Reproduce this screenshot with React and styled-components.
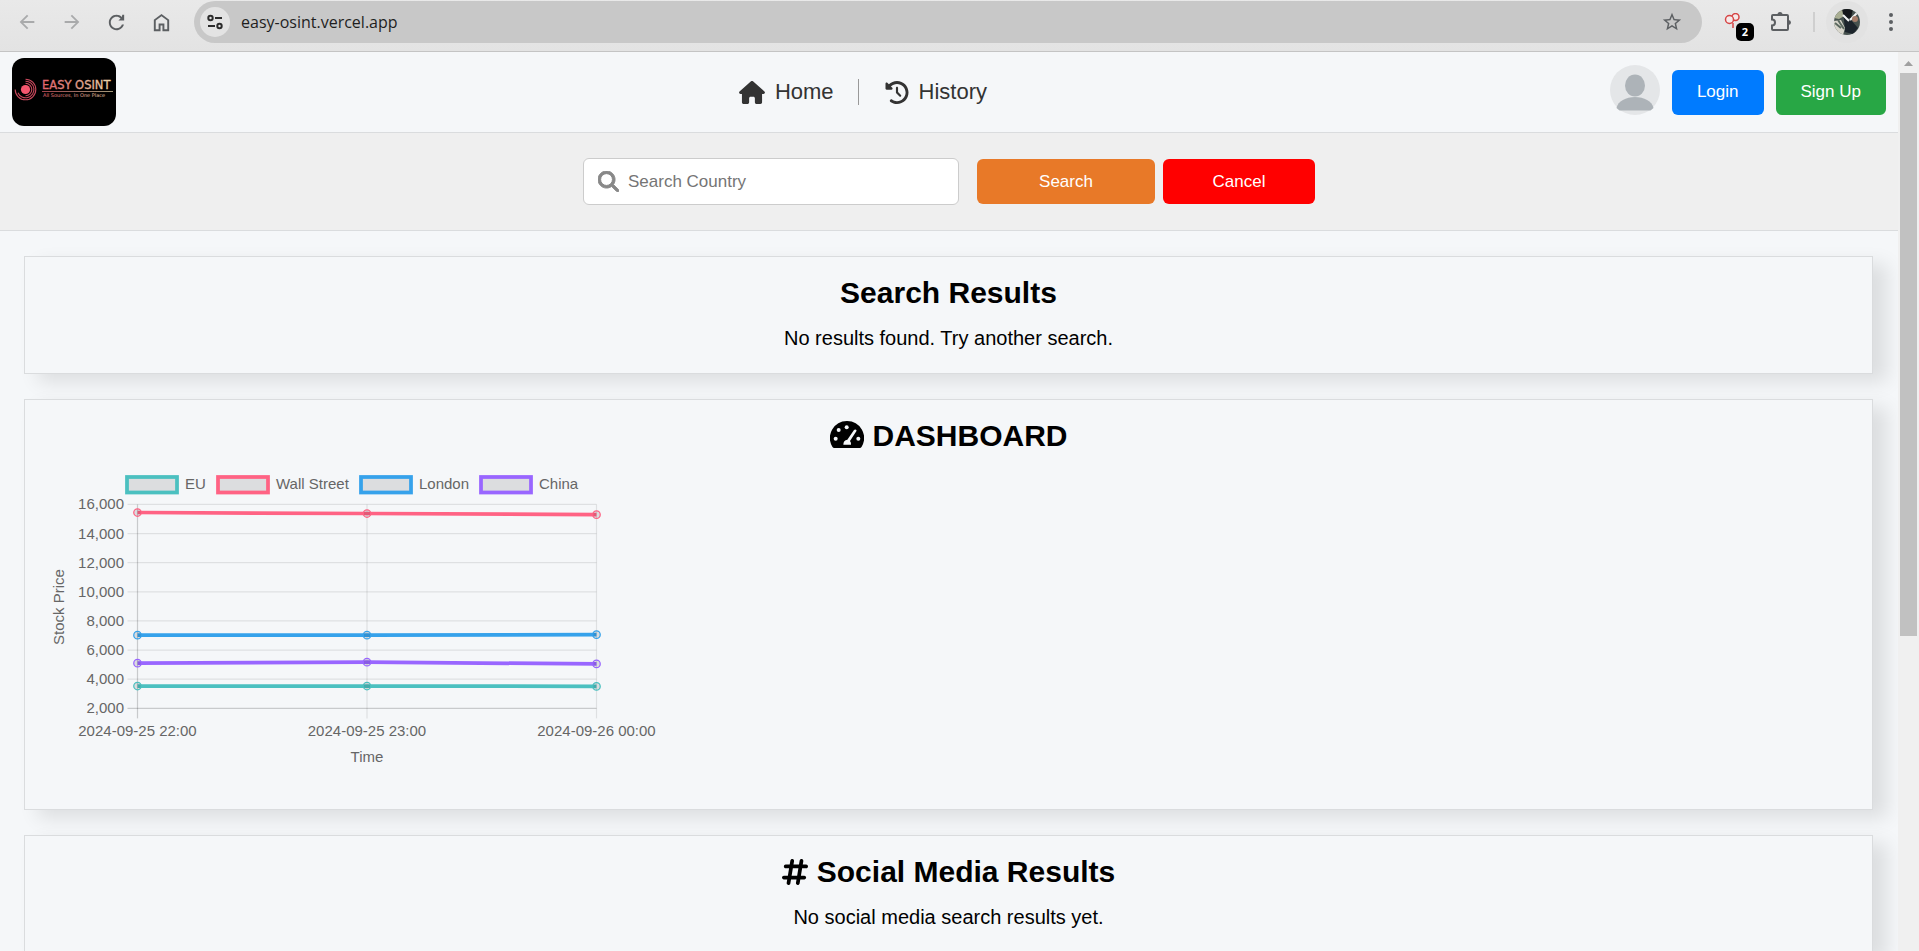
import React from "react";
import styled, { createGlobalStyle } from "styled-components";
import { FaHouse, FaClockRotateLeft, FaMagnifyingGlass, FaHashtag } from "react-icons/fa6";

const GlobalStyle = createGlobalStyle`
  * { box-sizing: border-box; }
  body {
    margin: 0;
    background: #f5f7f9;
    color: #000;
    font-family: "Liberation Sans", Arial, sans-serif;
  }
  button, input { font-family: inherit; }
`;

const Window = styled.div`
  display: flex;
  flex-direction: column;
  height: 100vh;
  overflow: hidden;
`;

/* ---------- browser toolbar ---------- */

const Toolbar = styled.div`
  flex: none;
  display: flex;
  align-items: flex-start;
  height: 52px;
  padding: 1px 5px 0 4px;
  background: linear-gradient(#e9e9e9, #e3e3e3);
  border-bottom: 1px solid #c4c4c4;
`;

const ToolButton = styled.button`
  flex: none;
  display: flex;
  align-items: center;
  justify-content: center;
  width: ${(p) => p.$width || 45}px;
  height: 42px;
  padding: 0;
  border: 0;
  background: none;
  color: ${(p) => (p.disabled ? "#a9aaab" : "#5c5f62")};
`;

const AddressBar = styled.div`
  flex: 1;
  display: flex;
  align-items: center;
  height: 42px;
  margin: 0 8px 0 10px;
  padding: 0 8px 0 6px;
  border-radius: 21px;
  background: #c8c8c8;
`;

const SiteInfo = styled.button`
  display: flex;
  align-items: center;
  justify-content: center;
  width: 30px;
  height: 30px;
  padding: 0;
  border: 0;
  border-radius: 50%;
  background: #e3e3e3;
`;

const AddressInput = styled.input`
  flex: 1;
  min-width: 0;
  margin-left: 11px;
  padding: 0;
  border: 0;
  outline: 0;
  background: none;
  color: #1f1f1f;
  font-family: "Open Sans", "Noto Sans", sans-serif;
  font-size: 16px;
  line-height: 24px;
`;

const ToolDivider = styled.span`
  width: 2px;
  height: 20px;
  margin: 11px 11px 0 7px;
  background: #cfcfcf;
`;

const ExtensionWrap = styled.span`
  position: relative;
  width: 18px;
  height: 18px;
  svg { display: block; }
`;

const ExtensionBadge = styled.span`
  position: absolute;
  left: 12px;
  top: 10px;
  width: 18px;
  height: 18px;
  border-radius: 5px;
  background: #000;
  color: #fff;
  font: bold 11px/18px "Open Sans", sans-serif;
  text-align: center;
`;

/* ---------- page shell ---------- */

const Viewport = styled.div`
  flex: 1;
  display: flex;
  min-height: 0;
`;

const Page = styled.div`
  flex: 1;
  min-width: 0;
  overflow: hidden;
`;

const Scrollbar = styled.div`
  flex: none;
  display: flex;
  flex-direction: column;
  align-items: center;
  width: 21px;
  background: #f0f0f0;
`;

const ScrollArrow = styled.svg`
  flex: none;
  width: 21px;
  height: 21px;
`;

const ScrollTrack = styled.div`
  flex: 1;
  width: 17px;
  margin-bottom: 21px;
`;

const ScrollThumb = styled.div`
  height: 65.7%;
  background: #c1c1c1;
`;

/* ---------- header ---------- */

const Header = styled.header`
  display: flex;
  align-items: center;
  justify-content: space-between;
  height: 81px;
  padding: 0 12px;
  border-bottom: 1px solid #dadcde;
`;

const Logo = styled.svg`
  display: block;
  width: 104px;
  height: 68px;
  margin-bottom: 1px;
`;

const Nav = styled.nav`
  display: flex;
  align-items: center;
`;

const NavLink = styled.a`
  display: flex;
  align-items: center;
  gap: 10px;
  color: #333;
  font-size: 22px;
  line-height: 26px;
  text-decoration: none;
  svg { flex: none; height: 23px; width: ${(p) => p.$iconWidth}px; }
  & + & {
    margin-left: 24px;
    padding-left: 26px;
    border-left: 1px solid #999;
  }
`;

const Account = styled.div`
  display: flex;
  align-items: center;
  gap: 12px;
`;

const Avatar = styled.svg`
  width: 50px;
  height: 50px;
  margin-bottom: 4px;
`;

const Button = styled.button`
  height: 45px;
  min-width: ${(p) => p.$width || 0}px;
  padding: 0 25px;
  border: 0;
  border-radius: 6px;
  background: ${(p) => p.$color};
  color: #fff;
  font-size: 17px;
  line-height: 20px;
`;

/* ---------- search ---------- */

const SearchForm = styled.form`
  display: flex;
  align-items: center;
  justify-content: center;
  gap: 8px;
  padding: 25px 0;
  background: #efefef;
  border-bottom: 1px solid #dadcde;
`;

const SearchField = styled.label`
  display: flex;
  align-items: center;
  gap: 9px;
  width: 376px;
  height: 47px;
  margin-right: 10px;
  padding: 0 14px;
  border: 1px solid #ccc;
  border-radius: 6px;
  background: #fff;
  color: #888;
  svg { flex: none; width: 21px; height: 21px; stroke: currentColor; stroke-width: 24px; }
`;

const SearchInput = styled.input`
  flex: 1;
  min-width: 0;
  padding: 0;
  border: 0;
  outline: 0;
  background: none;
  font-size: 17px;
  line-height: 20px;
  &::placeholder { color: #757575; }
`;

/* ---------- cards ---------- */

const Cards = styled.main`
  display: flex;
  flex-direction: column;
  gap: 25px;
  padding: 25px 25px 25px 24px;
`;

const Card = styled.section`
  padding: 19px 20px 20px;
  border: 1px solid #dadcde;
  background: #f5f7f9;
  box-shadow: 14px 8px 18px rgba(0, 0, 0, 0.1);
  text-align: center;
`;

const CardTitle = styled.h2`
  display: flex;
  align-items: center;
  justify-content: center;
  gap: 9px;
  margin: 0;
  font-size: 30px;
  line-height: 34px;
  svg { flex: none; height: 30px; width: ${(p) => p.$iconWidth}px; }
`;

const CardText = styled.p`
  margin: 16px 0 3px;
  font-size: 20px;
  line-height: 24px;
`;

const Chart = styled.svg`
  display: block;
  width: 640px;
  height: 326px;
  margin-top: 10px;
  font-size: 15px;
  fill: #666;
`;

const SERIES = [
  { name: "EU", color: "rgb(75,192,192)", y: [223, 223, 223.4], legendX: 80 },
  { name: "Wall Street", color: "rgb(255,99,132)", y: [49.5, 50.5, 51.7], legendX: 171 },
  { name: "London", color: "rgb(54,162,235)", y: [172.2, 172.2, 171.7], legendX: 314 },
  { name: "China", color: "rgb(153,102,255)", y: [200.2, 199.2, 200.9], legendX: 434 },
];
const TIMES = ["2024-09-25 22:00", "2024-09-25 23:00", "2024-09-26 00:00"];
const PRICES = [16000, 14000, 12000, 10000, 8000, 6000, 4000, 2000];
const COLUMNS = [92.5, 322, 551.5];
const TOP = 41.4;
const STEP = 29.14;
const BOTTOM = TOP + 7 * STEP;

function StockChart() {
  return (
    <Chart viewBox="0 0 640 326" role="img" aria-label="Stock prices over time">
      {SERIES.map((s) => (
        <g key={s.name}>
          <rect x={s.legendX + 2} y="14" width="50" height="15.5" fill="rgba(0,0,0,0.1)" stroke={s.color} strokeWidth="3.75" />
          <text x={s.legendX + 60} y="26">{s.name}</text>
        </g>
      ))}
      {PRICES.map((price, i) => (
        <g key={price}>
          <line x1="82.5" x2="551.5" y1={TOP + i * STEP} y2={TOP + i * STEP}
            stroke={i === 7 ? "rgba(0,0,0,0.18)" : "rgba(0,0,0,0.09)"} strokeWidth="1.25" />
          <text x="79" y={TOP + i * STEP + 5} textAnchor="end">{price.toLocaleString("en-US")}</text>
        </g>
      ))}
      {TIMES.map((time, i) => (
        <g key={time}>
          <line x1={COLUMNS[i]} x2={COLUMNS[i]} y1={TOP} y2={BOTTOM + 10}
            stroke={i === 0 ? "rgba(0,0,0,0.18)" : "rgba(0,0,0,0.09)"} strokeWidth="1.25" />
          <text x={COLUMNS[i]} y="273" textAnchor="middle">{time}</text>
        </g>
      ))}
      <text x="322" y="299" textAnchor="middle">Time</text>
      <text transform="translate(19 144) rotate(-90)" textAnchor="middle">Stock Price</text>
      {[...SERIES].reverse().map((s) => (
        <g key={s.name}>
          <polyline points={s.y.map((y, i) => `${COLUMNS[i]},${y}`).join(" ")} fill="none" stroke={s.color} strokeWidth="3.75" />
          {s.y.map((y, i) => (
            <circle key={i} cx={COLUMNS[i]} cy={y} r="3.75" fill="rgba(0,0,0,0.1)" stroke={s.color} strokeWidth="1.25" />
          ))}
        </g>
      ))}
    </Chart>
  );
}

function GaugeIcon() {
  return (
    <svg viewBox="0 0 102 90" aria-hidden="true">
      <path d="M51 0a51 51 0 0 1 44 77q-2 4-6 4H13q-4 0-6-4A51 51 0 0 1 51 0z" fill="currentColor" />
      <g fill="#f5f7f9">
        <circle cx="17" cy="53" r="6" />
        <circle cx="26" cy="27" r="6" />
        <circle cx="50" cy="19" r="6" />
        <circle cx="85" cy="53" r="6" />
        <path d="M40 71q0-14 12-15l20-29q3-3 6-1t1 5L60 60q4 5 3 11z" />
      </g>
    </svg>
  );
}

function BrandLogo() {
  return (
    <Logo viewBox="0 0 104 68" role="img" aria-label="Easy OSINT">
      <defs>
        <linearGradient id="brand" gradientUnits="userSpaceOnUse" x1="30" y1="0" x2="101" y2="0">
          <stop offset="0" stopColor="#e4606c" />
          <stop offset="0.5" stopColor="#dd9c8c" />
          <stop offset="1" stopColor="#ecdcae" />
        </linearGradient>
      </defs>
      <rect width="104" height="68" rx="12" fill="#000" />
      <circle cx="13.5" cy="31.5" r="4.6" fill="#f4566e" />
      <g fill="none" stroke="#c8485c" strokeWidth="1.1">
        <path d="M13.5 25.200a6.300 6.300 0 0 1 0 12.600" />
        <path d="M13.5 23.200a8.300 8.300 0 1 1 -7.500 11.500" />
        <path d="M13.5 21.200a10.300 10.300 0 1 1 -10.300 10.300" />
      </g>
      <text x="30" y="31" fontFamily="DejaVu Sans" fontSize="11.5" fill="url(#brand)" stroke="url(#brand)" strokeWidth="0.3">EASY OSINT</text>
      <path d="M30 33.500H101" stroke="url(#brand)" strokeWidth="0.7" />
      <text x="31" y="39" fontFamily="DejaVu Sans" fontSize="5" fill="url(#brand)">All Sources, In One Place</text>
    </Logo>
  );
}

const Icon = ({ d, size = 23 }) => (
  <svg width={size} height={size} viewBox="0 0 24 24" fill="currentColor" aria-hidden="true">
    <path d={d} />
  </svg>
);

const BACK = "M20 11H7.830l5.590-5.590L12 4l-8 8 8 8 1.410-1.410L7.830 13H20v-2z";
const FORWARD = "M4 11h12.170l-5.590-5.590L12 4l8 8-8 8-1.410-1.410L16.170 13H4v-2z";
const RELOAD = "M17.650 6.350C16.200 4.900 14.210 4 12 4c-4.420 0-7.990 3.580-7.990 8s3.570 8 7.990 8c3.730 0 6.840-2.550 7.730-6h-2.080c-.820 2.330-3.040 4-5.650 4-3.310 0-6-2.690-6-6s2.690-6 6-6c1.660 0 3.140.690 4.220 1.780L14 10h6V4h-2z";
const HOME = "M6 19h3v-6h6v6h3v-9l-6-4.500L6 10v9zm-2 2V9l8-6 8 6v12h-7v-6h-2v6H4z";
const STAR = "M22 9.240l-7.190-.620L12 2 9.190 8.630 2 9.240l5.460 4.730L5.820 21 12 17.270 18.180 21l-1.630-7.030L22 9.240zM12 15.400l-3.760 2.270 1-4.280-3.320-2.880 4.380-.380L12 6.100l1.710 4.040 4.380.380-3.320 2.880 1 4.280L12 15.400z";

function BrowserToolbar() {
  return (
    <Toolbar>
      <ToolButton disabled aria-label="Back"><Icon d={BACK} size={22} /></ToolButton>
      <ToolButton disabled aria-label="Forward"><Icon d={FORWARD} size={22} /></ToolButton>
      <ToolButton aria-label="Reload"><Icon d={RELOAD} /></ToolButton>
      <ToolButton aria-label="Home page"><Icon d={HOME} /></ToolButton>
      <AddressBar>
        <SiteInfo aria-label="Site information">
          <svg width="18" height="18" viewBox="0 0 18 18" fill="none" stroke="#2b2b2b" strokeWidth="2">
            <circle cx="4.500" cy="5" r="2.200" />
            <path d="M9 5h7M2 13h7" />
            <circle cx="13.500" cy="13" r="2.200" />
          </svg>
        </SiteInfo>
        <AddressInput aria-label="Address" defaultValue="easy-osint.vercel.app" />
        <ToolButton aria-label="Bookmark"><Icon d={STAR} size={22} /></ToolButton>
      </AddressBar>
      <ToolButton $width={46} aria-label="Extension">
        <ExtensionWrap>
          <svg width="18" height="18" viewBox="0 0 18 18" fill="#f5eaea" stroke="#d64545" strokeWidth="1.500">
            <path d="M9 10v5" />
            <circle cx="11.500" cy="4" r="3.500" />
            <circle cx="5.500" cy="6.500" r="4" />
          </svg>
          <ExtensionBadge>2</ExtensionBadge>
        </ExtensionWrap>
      </ToolButton>
      <ToolButton $width={50} aria-label="Extensions">
        <svg width="22" height="22" viewBox="0 0 22 22">
          <path d="M3 4h14a1 1 0 0 1 1 1v13a1 1 0 0 1-1 1H3a1 1 0 0 1-1-1v-3.500a3 3 0 0 0 0-6V5a1 1 0 0 1 1-1z" fill="none" stroke="#5c5f62" strokeWidth="2" />
          <path d="M7.500 3.500a2.500 2.500 0 0 1 5 0zM18.500 9a2.500 2.500 0 0 1 0 5z" fill="#5c5f62" />
        </svg>
      </ToolButton>
      <ToolDivider />
      <ToolButton $width={42} aria-label="Profile">
        <svg width="42" height="42" viewBox="0 0 42 42">
          <defs><clipPath id="face"><circle cx="21" cy="21" r="13" /></clipPath></defs>
          <circle cx="21" cy="21" r="21" fill="#e2e2e2" />
          <g clipPath="url(#face)">
            <rect x="8" y="8" width="26" height="26" fill="#47524f" />
            <path d="M8 8h9l3 6-7 4-5-1z" fill="#a9ae93" />
            <path d="M16 8h11l-2 9-7 1z" fill="#15181b" />
            <path d="M18 18l7 1 7 8-5 6-8-2z" fill="#1c242c" />
            <path d="M8 20l7-1 4 8-2 7H8z" fill="#d8d6cc" />
            <path d="M9 22l6 5M12 19l6 9" stroke="#5c6a61" strokeWidth="2" />
            <path d="M17 14l6 6M32 11l-8 8" stroke="#f2f4f4" strokeWidth="2" />
            <circle cx="29" cy="18" r="3" fill="#a77e6b" />
          </g>
        </svg>
      </ToolButton>
      <ToolButton $width={46} aria-label="Menu">
        <svg width="6" height="20" viewBox="0 0 6 20" fill="currentColor">
          <circle cx="3" cy="3" r="2" /><circle cx="3" cy="10" r="2" /><circle cx="3" cy="17" r="2" />
        </svg>
      </ToolButton>
    </Toolbar>
  );
}

export default function App() {
  return (
    <Window>
      <GlobalStyle />
      <BrowserToolbar />
      <Viewport>
        <Page>
          <Header>
            <BrandLogo />
            <Nav>
              <NavLink href="#home" $iconWidth={26}><FaHouse />Home</NavLink>
              <NavLink href="#history" $iconWidth={24}><FaClockRotateLeft />History</NavLink>
            </Nav>
            <Account>
              <Avatar viewBox="0 0 50 50" role="img" aria-label="Guest">
                <circle cx="25" cy="25" r="25" fill="#e4e6e8" />
                <ellipse cx="25" cy="20.500" rx="10" ry="11" fill="#adb3b8" />
                <path d="M6.500 43C8 36 16 32 25 32s17 4 18.500 11l-3 2.500h-31z" fill="#adb3b8" />
              </Avatar>
              <Button type="button" $color="#007bff">Login</Button>
              <Button type="button" $color="#28a745">Sign Up</Button>
            </Account>
          </Header>
          <SearchForm onSubmit={(e) => e.preventDefault()}>
            <SearchField>
              <FaMagnifyingGlass />
              <SearchInput type="text" placeholder="Search Country" aria-label="Search Country" />
            </SearchField>
            <Button type="submit" $width={178} $color="#e87928">Search</Button>
            <Button type="reset" $width={152} $color="#ff0000">Cancel</Button>
          </SearchForm>
          <Cards>
            <Card>
              <CardTitle>Search Results</CardTitle>
              <CardText>No results found. Try another search.</CardText>
            </Card>
            <Card>
              <CardTitle $iconWidth={34}><GaugeIcon />DASHBOARD</CardTitle>
              <StockChart />
            </Card>
            <Card>
              <CardTitle $iconWidth={26}><FaHashtag />Social Media Results</CardTitle>
              <CardText>No social media search results yet.</CardText>
            </Card>
          </Cards>
        </Page>
        <Scrollbar aria-hidden="true">
          <ScrollArrow viewBox="0 0 21 21"><path d="M6 14l4.500-5 4.500 5z" fill="#a0a0a0" /></ScrollArrow>
          <ScrollTrack><ScrollThumb /></ScrollTrack>
        </Scrollbar>
      </Viewport>
    </Window>
  );
}
